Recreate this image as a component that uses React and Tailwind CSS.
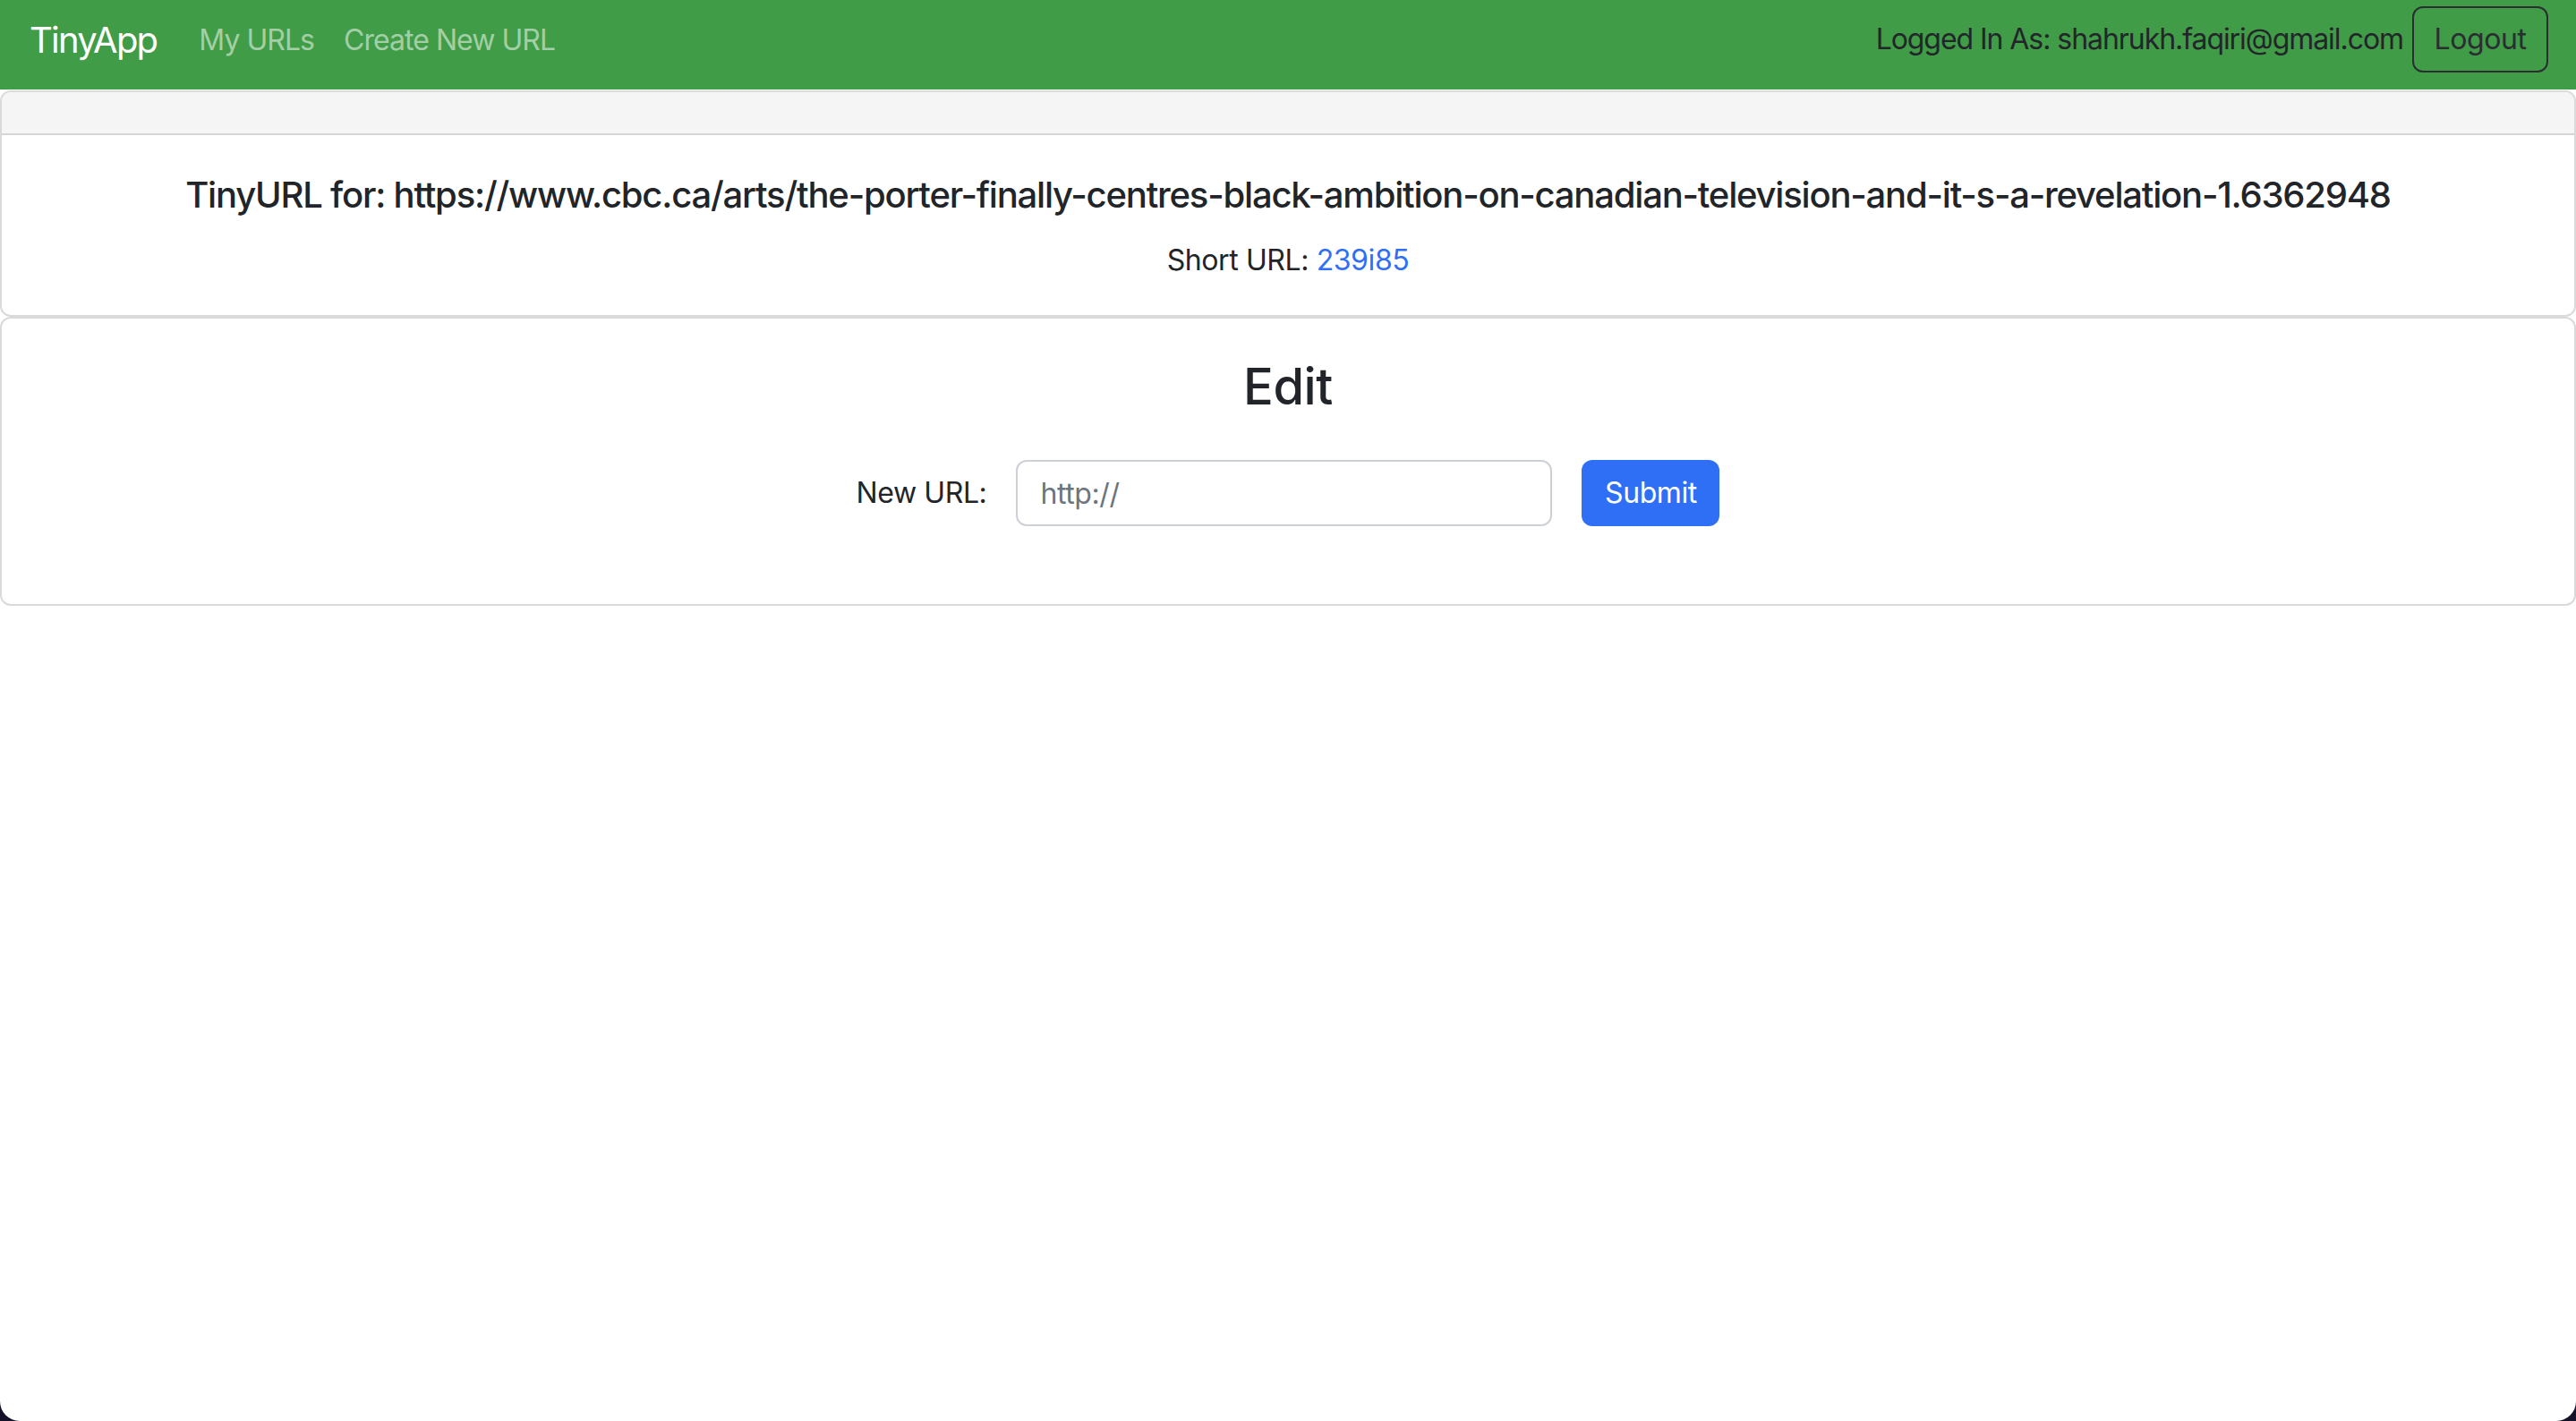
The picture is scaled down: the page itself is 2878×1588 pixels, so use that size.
import React from 'react'

const font = { fontFamily: 'Inter, "Noto Sans", "Liberation Sans", sans-serif' }

function Navbar() {
  return (
    <nav className="h-[100px] bg-[#409c46] flex items-start justify-between pt-[8px] pl-[33px] pr-[31px]">
      <div className="flex items-center h-[74px]">
        <a className="text-[40px] leading-[48px] text-white tracking-[-0.045em]">TinyApp</a>
        <a className="ml-[47px] text-[32px] leading-[48px] text-[#a3cfa6] tracking-[-0.03em]">My URLs</a>
        <a className="ml-[33px] text-[32px] leading-[48px] text-[#a3cfa6] tracking-[-0.03em]">Create New URL</a>
      </div>
      <div className="flex items-center h-[74px] -mt-[1px]">
        <span className="text-[32px] leading-[48px] text-[#22262a] tracking-[-0.033em]">Logged In As: shahrukh.faqiri@gmail.com</span>
        <button className="ml-[10px] h-[74px] w-[152px] border-2 border-[#2a2e31] rounded-[12px] text-[32px] leading-[48px] text-[#2a2e31]">
          Logout
        </button>
      </div>
    </nav>
  )
}

export default function App() {
  return (
    <div style={font} className="bg-[#15112b] h-[1588px] overflow-hidden tracking-[-0.025em]">
      <div className="bg-white h-[1588px] rounded-b-[22px] text-[#212529]">
        <Navbar />
        <div className="border-2 border-[#dadada] rounded-[12px] mt-[1px]">
          <div className="h-[48px] bg-[#f5f5f5] border-b-2 border-[#d6d6d6] rounded-t-[10px]" />
          <div className="pt-[43px] pb-[37px] text-center">
            <h5 className="text-[40px] leading-[48px] font-medium tracking-[-0.03em]">
              TinyURL for: https://www.cbc.ca/arts/the-porter-finally-centres-black-ambition-on-canadian-television-and-it-s-a-revelation-1.6362948
            </h5>
            <p className="mt-[25px] text-[32px] leading-[48px]">
              Short URL: <a className="text-[#2f6ff6]">239i85</a>
            </p>
          </div>
        </div>
        <div className="border-2 border-[#dadada] rounded-[12px]">
          <div className="pt-[43px] pb-[87px] text-center">
            <h3 className="text-[56px] leading-[67px] font-medium">Edit</h3>
            <form className="mt-[48px] flex items-center justify-center" onSubmit={e => e.preventDefault()}>
              <label className="text-[32px] leading-[48px]">New URL:</label>
              <input
                className="ml-[33px] w-[599px] h-[74px] border-2 border-[#cdd1d6] rounded-[12px] pl-[25px] text-[32px] placeholder:text-[#6c757d] outline-none"
                placeholder="http://"
              />
              <button className="ml-[33px] w-[154px] h-[74px] bg-[#2f6ff6] rounded-[12px] text-white text-[32px] leading-[48px]">
                Submit
              </button>
            </form>
          </div>
        </div>
      </div>
    </div>
  )
}
